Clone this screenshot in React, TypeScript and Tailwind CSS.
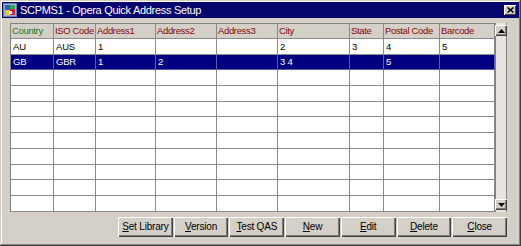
import React from "react";

const cols = [
  { name: "Country", color: "text-[#1c7a1c]" },
  { name: "ISO Code", color: "text-[#860808]" },
  { name: "Address1", color: "text-[#860808]" },
  { name: "Address2", color: "text-[#860808]" },
  { name: "Address3", color: "text-[#860808]" },
  { name: "City", color: "text-[#860808]" },
  { name: "State", color: "text-[#860808]" },
  { name: "Postal Code", color: "text-[#860808]" },
  { name: "Barcode", color: "text-[#860808]" },
];

const rows: string[][] = [
  ["AU", "AUS", "1", "", "", "2", "3", "4", "5"],
  ["GB", "GBR", "1", "2", "", "3 4", "", "5", ""],
  ...Array.from({ length: 9 }, () => ["", "", "", "", "", "", "", "", ""]),
];

const buttons: [string, string][] = [
  ["S", "et Library"],
  ["V", "ersion"],
  ["T", "est QAS"],
  ["N", "ew"],
  ["E", "dit"],
  ["D", "elete"],
  ["C", "lose"],
];

function Arrow({ up }: { up: boolean }) {
  return (
    <div className="h-[11px] w-[12px] bg-[#d4d0c8] flex items-center justify-center shadow-[inset_1px_1px_#ffffff,inset_-1px_-1px_#404040,inset_-2px_-2px_#808080]">
      <svg width="7" height="4" viewBox="0 0 7 4">
        {up ? <polygon points="3.5,0 7,4 0,4" fill="#000" /> : <polygon points="0,0 7,0 3.5,4" fill="#000" />}
      </svg>
    </div>
  );
}

export default function App() {
  return (
    <div
      className="w-[521px] h-[246px] bg-[#d4d0c8] p-[2px] flex flex-col shadow-[inset_-1px_-1px_#404040,inset_1px_1px_#d4d0c8,inset_-2px_-2px_#808080,inset_2px_2px_#ffffff] text-[9.5px] tracking-[-0.2px]"
      style={{ fontFamily: '"Liberation Sans", Arial, sans-serif' }}
    >
      {/* Title bar */}
      <div className="h-[16px] bg-[#06066e] flex items-center pl-[1px] pr-[3px]">
        <svg width="14" height="14" viewBox="0 0 14 14" className="shrink-0">
          <rect x="0" y="0" width="14" height="14" fill="#6a7fa8" />
          <rect x="1" y="1" width="12" height="12" fill="#9fb3d1" />
          <rect x="2" y="2" width="5" height="5" fill="#2b5fb8" />
          <rect x="7" y="2" width="5" height="4" fill="#2fa35a" />
          <rect x="3" y="7" width="4" height="5" fill="#e8d020" />
          <rect x="7" y="6" width="5" height="6" fill="#d02030" />
          <rect x="6" y="8" width="3" height="3" fill="#ffffff" />
          <rect x="9" y="9" width="2" height="2" fill="#9040b0" />
        </svg>
        <span className="ml-[3px] text-white text-[11px] tracking-[-0.3px] leading-none">
          SCPMS1 - Opera Quick Address Setup
        </span>
        <div className="ml-auto h-[10px] w-[12px] bg-[#d4d0c8] flex items-center justify-center shadow-[inset_1px_1px_#ffffff,inset_-1px_-1px_#404040]">
          <svg width="7" height="6" viewBox="0 0 7 6">
            <path d="M0.5 0.5 L6.5 5.5 M6.5 0.5 L0.5 5.5" stroke="#000" strokeWidth="1.5" />
          </svg>
        </div>
      </div>

      {/* Grid + scrollbar */}
      <div className="mt-[5px] ml-[8px] flex">
        <div className="border-t border-l border-[#808080] grid grid-cols-[43px_42px_60px_61px_61px_72px_34px_56px_55px] grid-rows-[15px_repeat(11,15.7px)]">
          {cols.map((c) => (
            <div
              key={c.name}
              className={`bg-[#d4d0c8] border-r border-b border-[#8a8a8a] pl-[1px] flex items-center whitespace-nowrap overflow-hidden leading-none tracking-[-0.35px] ${c.color}`}
            >
              {c.name}
            </div>
          ))}
          {rows.map((r, ri) =>
            r.map((v, ci) => (
              <div
                key={`${ri}-${ci}`}
                className={
                  ri === 1
                    ? "bg-[#000080] text-white border-r border-b border-[#5a5aa0] pl-[2px] flex items-center leading-none"
                    : "bg-white text-black border-r border-b border-[#8a8a8a] pl-[2px] flex items-center leading-none"
                }
              >
                {v}
              </div>
            ))
          )}
        </div>
        <div className="w-[12px] h-[189px] bg-[#e6e4df] flex flex-col justify-between py-[2px] shadow-[inset_1px_0_#808080,inset_-1px_0_#808080]">
          <Arrow up={true} />
          <Arrow up={false} />
        </div>
      </div>

      {/* Buttons */}
      <div className="mt-[5px] ml-[116px] w-[389px] grid grid-cols-7 gap-[1px]">
        {buttons.map(([k, rest]) => (
          <div
            key={k + rest}
            className="h-[20px] bg-[#d4d0c8] flex items-center justify-center text-black leading-none text-[10px] shadow-[inset_1px_1px_#ffffff,inset_-1px_-1px_#404040,inset_-2px_-2px_#808080]"
          >
            <span>
              <span className="underline">{k}</span>
              {rest}
            </span>
          </div>
        ))}
      </div>
    </div>
  );
}
